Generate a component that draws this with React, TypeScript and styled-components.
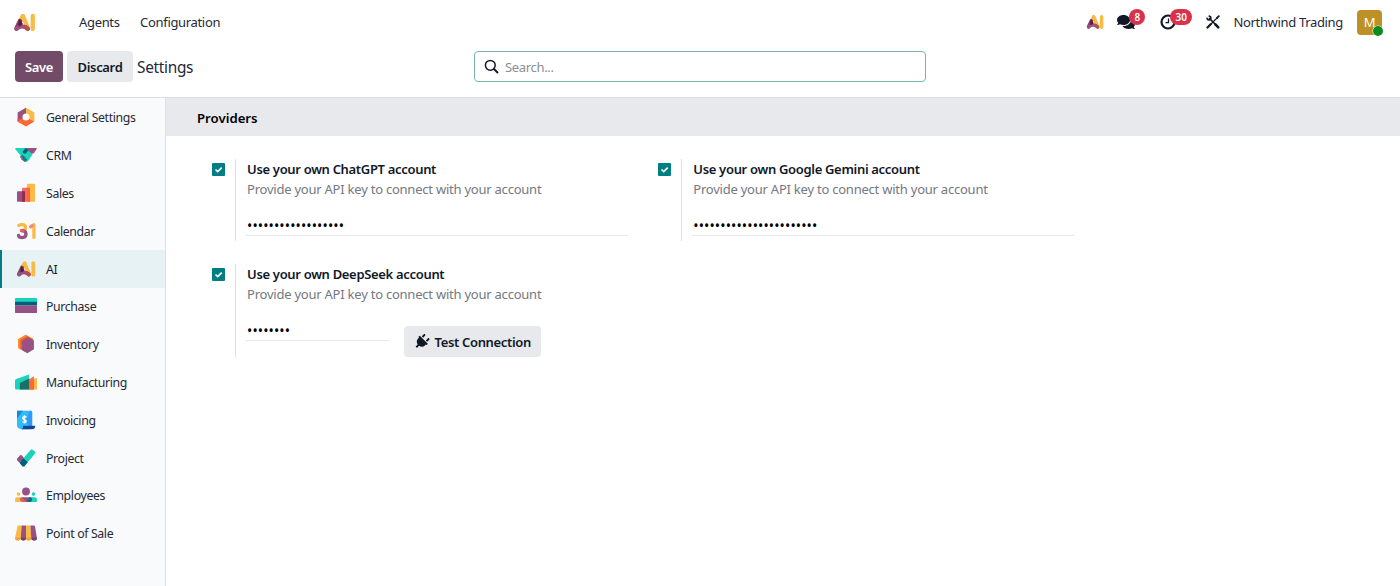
import React from "react";
import styled, { createGlobalStyle } from "styled-components";
import { FaComments, FaPlug } from "react-icons/fa";

const GlobalStyle = createGlobalStyle`
  *, *::before, *::after { box-sizing: border-box; }
  html, body { margin: 0; padding: 0; height: 100%; background: #fff; }
  body { overflow: hidden; color: #111827; font-family: "Noto Sans", "Open Sans", sans-serif; font-size: 13px; line-height: 20px; }
  button, input { font: inherit; color: inherit; letter-spacing: inherit; }
`;

const Page = styled.div`
  display: flex;
  flex-direction: column;
  height: 586px;
`;
const Navbar = styled.header`
  display: flex;
  align-items: center;
  height: 44px;
  padding: 0 18px 0 12px;
  letter-spacing: -0.33px;
  white-space: nowrap;
`;
const Menu = styled.nav`
  display: flex;
  margin-left: 42px;
  gap: 20.5px;
  flex: 1;
`;
const MenuLink = styled.a`
  color: #1f2937;
`;
const Systray = styled.div`
  display: flex;
  align-items: center;
`;
const TrayItem = styled.div<{ $width: number }>`
  position: relative;
  display: flex;
  align-items: center;
  width: ${(p) => p.$width}px;
  height: 24px;
`;
const Badge = styled.span<{ $left: number }>`
  position: absolute;
  top: -1px;
  left: ${(p) => p.$left}px;
  height: 16px;
  padding: 0 5px;
  border-radius: 8px;
  background: #d9324a;
  color: #fff;
  font-size: 10px;
  font-weight: 600;
  line-height: 16px;
  letter-spacing: 0;
`;
const Avatar = styled.div`
  position: relative;
  width: 25px;
  height: 25px;
  margin-left: 14px;
  border-radius: 4px;
  background: #bd9126;
  color: #fff;
  font-size: 13px;
  line-height: 25px;
  text-align: center;
`;
const Presence = styled.span`
  position: absolute;
  right: -1px;
  bottom: -1px;
  width: 10px;
  height: 10px;
  border-radius: 50%;
  background: #0b8a20;
  box-shadow: 0 0 0 0.5px #fff;
`;

const ControlPanel = styled.div`
  display: grid;
  grid-template-columns: 459px 452px 1fr;
  height: 54px;
  padding: 7px 15px 0;
  border-bottom: 1px solid #dcdee2;
  letter-spacing: -0.33px;
`;
const Actions = styled.div`
  display: flex;
  gap: 4px;
`;
const Button = styled.button<{ $primary?: boolean; $width: number }>`
  display: flex;
  align-items: center;
  justify-content: center;
  gap: 5px;
  width: ${(p) => p.$width}px;
  height: 31px;
  padding: 1px 0 0;
  border: 0;
  border-radius: 4px;
  background: ${(p) => (p.$primary ? "#714b67" : "#e7e9ed")};
  color: ${(p) => (p.$primary ? "#fff" : "#111827")};
  font-weight: 600;
  letter-spacing: -0.33px;
  white-space: nowrap;
`;
const Title = styled.h1`
  margin: 0;
  padding-top: 1px;
  font-size: 15.4px;
  font-weight: 400;
  line-height: 31px;
  letter-spacing: -0.3px;
  color: #1f2937;
`;
const SearchBox = styled.label`
  display: flex;
  align-items: center;
  gap: 6px;
  height: 31px;
  padding: 0 9px;
  border: 1px solid #75b5b1;
  border-radius: 4px;
`;
const SearchInput = styled.input`
  flex: 1;
  padding: 0;
  border: 0;
  outline: 0;
  background: none;
  &::placeholder { color: #8b8f97; opacity: 1; }
`;

const Body = styled.div`
  display: flex;
  flex: 1;
  min-height: 0;
`;
const Sidebar = styled.aside`
  width: 166px;
  padding-top: 0.6px;
  border-right: 1px solid #dfe1e5;
  background: #f9fafb;
  font-size: 12.3px;
  letter-spacing: -0.36px;
`;
const Tab = styled.div<{ $active?: boolean }>`
  display: flex;
  align-items: center;
  gap: 9px;
  height: 37.8px;
  padding-left: 13px;
  border-left: 2px solid ${(p) => (p.$active ? "#017e84" : "transparent")};
  background: ${(p) => (p.$active ? "#e6f2f3" : "transparent")};
  color: ${(p) => (p.$active ? "#111827" : "#1f2937")};
  white-space: nowrap;
`;
const TabLabel = styled.span`
  padding-top: 2px;
`;
const Content = styled.main`
  flex: 1;
`;
const SectionTitle = styled.h2`
  height: 38px;
  margin: 0;
  padding-left: 31px;
  background: #e7e9ed;
  font-size: 13.2px;
  font-weight: 600;
  line-height: 40px;
  color: #000;
`;
const SettingsGrid = styled.div`
  display: grid;
  grid-template-columns: 446.3px 446.3px;
  row-gap: 23px;
  padding: 23px 0 0 46px;
`;
const Setting = styled.section`
  display: flex;
`;
const Check = styled.span`
  display: flex;
  width: 13px;
  height: 13px;
  margin: 4px 10px 0 0;
  border-radius: 1px;
  background: #017e84;
`;
const SettingPane = styled.div<{ $height: number }>`
  width: 396px;
  height: ${(p) => p.$height}px;
  padding-left: 11px;
  border-left: 1px solid #dfe1e5;
  white-space: nowrap;
`;
const SettingName = styled.div`
  font-weight: 600;
  letter-spacing: -0.32px;
`;
const SettingHelp = styled.div`
  color: #74787f;
  letter-spacing: -0.23px;
`;
const FieldRow = styled.div`
  display: flex;
  gap: 15px;
  padding-top: 16px;
`;
const KeyField = styled.div<{ $width: number }>`
  width: ${(p) => p.$width}px;
  height: 21px;
  margin-left: -1px;
  padding-left: 1px;
  border-bottom: 1px solid #e7e9ec;
  font-size: 14px;
  line-height: 22px;
  letter-spacing: 0.13px;
  color: #000;
`;
const ButtonSlot = styled.div`
  padding-top: 6px;
`;
const PlugIcon = styled(FaPlug)`
  transform: rotate(45deg);
`;
const IconSvg = styled.svg`
  flex-shrink: 0;
`;

const Icon = ({ size = 22, children }: { size?: number; children: React.ReactNode }) => (
  <IconSvg width={size} height={size} viewBox="0 0 50 50">{children}</IconSvg>
);

const AiShapes = () => (
  <g fill="none" strokeLinecap="round" strokeLinejoin="round">
    <path d="M41.500 11.500V38" stroke="#fbb945" strokeWidth="8.500" />
    <path d="M21.500 12.500L10 36" stroke="#fbb945" strokeWidth="9" />
    <path d="M22 12.500L31.500 36" stroke="#fbb945" strokeWidth="9" />
    <path d="M16 22L9 37" stroke="#88426f" strokeWidth="9" />
    <path d="M9 37.500Q20 28 31.500 37.500" stroke="#985184" strokeWidth="8.500" />
    <path d="M15 20.500L20 28L14 31Z" fill="#5a1c44" stroke="#5a1c44" strokeWidth="3" />
    <path d="M28 34.500L31.500 37.500" stroke="#b4524f" strokeWidth="8.500" />
  </g>
);

const icons: Record<string, React.ReactNode> = {
  general: (
    <>
      <path d="M25 4L44 14.500V35L25 25Z" fill="#fbb945" />
      <path d="M25 4V25L6 36V14.500Z" fill="#985184" />
      <path d="M6 36L25 25L44 35L25 46.500Z" fill="#fc6831" />
      <path d="M6 27L18 29L6 36Z" fill="#e2524b" />
      <circle cx="25" cy="25" r="8" fill="#f9fafb" />
    </>
  ),
  crm: (
    <>
      <path d="M24 9H48Q50.500 9 49.500 11L43 21L30 24Z" fill="#985184" />
      <path d="M13 34L18 29L26 38L22 41Z" fill="#985184" />
      <path d="M2 9H24L40 24L29 39Q26 42 23 39L1 12Q-1 9 2 9Z" fill="#1ad3bb" />
      <path d="M24 9L30 15L24 22Q19 23 17 18Z" fill="#005e7a" />
      <path d="M13 27L18 25L28 36L24 40L20 37Z" fill="#0c7e86" />
      <path d="M11 29L14 26L17 29L14 33Z" fill="#985184" />
    </>
  ),
  sales: (
    <>
      <rect x="27" y="4" width="18.500" height="41" rx="2" fill="#fbb945" />
      <rect x="16" y="13" width="18" height="32" rx="2" fill="#f86b6b" />
      <path d="M27 13H32Q34 13 34 15V43Q34 45 32 45H27Z" fill="#fc6831" />
      <rect x="4.500" y="21" width="18.300" height="24" rx="2" fill="#985184" />
      <path d="M16 21H21Q22.800 21 22.800 23V43Q22.800 45 21 45H16Z" fill="#962b48" />
    </>
  ),
  calendar: (
    <g fill="none" strokeWidth="7.500" strokeLinecap="round" strokeLinejoin="round">
      <path d="M8.500 12.500Q11 10.500 16 10.500Q24 10.500 24 17Q24 24 15 24" stroke="#fbb945" />
      <path d="M15 24Q25 24 25 32Q25 40 16 40Q9 40 8 35" stroke="#985184" />
      <path d="M15 24H18" stroke="#e2624b" />
      <path d="M36 15L43 10.500V39.500" stroke="#fbb945" />
      <path d="M35.500 15.500L39 13" stroke="#f08a8a" />
    </g>
  ),
  ai: <AiShapes />,
  purchase: (
    <>
      <path d="M0 9Q0 7 2 7H48Q50 7 50 9V16H0Z" fill="#1ad3bb" />
      <path d="M0 15.500H50V24H0Z" fill="#005e7a" />
      <path d="M0 24H50V39Q50 41 48 41H2Q0 41 0 39Z" fill="#985184" />
    </>
  ),
  inventory: (
    <>
      <path d="M24 4L41 13V33L24 43L7 34V14Z" fill="#fbb945" />
      <path d="M24 4L41 13V20L14 38L7 34V14Z" fill="#fc8a35" />
      <path d="M27 7L41 14V20L16 38L12 36V16Z" fill="#e9602d" />
      <path d="M29.500 10L43 17V37L28 46L16 39V18Z" fill="#985184" />
    </>
  ),
  manufacturing: (
    <>
      <path d="M36 20L50 16V42H36Z" fill="#fbb945" />
      <path d="M30 20L43 12V42H30Z" fill="#f86b6b" />
      <path d="M32 24L43 19V42H32Z" fill="#fc6831" />
      <path d="M0 22Q0 19 3 18L32 8V42H3Q0 42 0 39Z" fill="#1ad3bb" />
      <path d="M11 27L32 17V42H11Z" fill="#1a6f66" />
    </>
  ),
  invoicing: (
    <>
      <path d="M4.500 4H36Q39 4 39 7V38L32 46H15Q4.500 46 4.500 36Z" fill="#2ebcfa" />
      <path d="M4.500 4H18L4.500 22Z" fill="#1588d8" />
      <path d="M39 7V38H32L25 27L34 4Q39 4 39 7Z" fill="#3397f6" />
      <path d="M18 38H46Q46 46 38 46H14Q19 45 18 38Z" fill="#144496" />
      <path d="M26 18.500Q21 15.500 18 18.500Q16.500 22 21 24Q27 26 25 29Q22 32 17 29M21.500 14V33" fill="none" stroke="#fff" strokeWidth="3" />
    </>
  ),
  project: (
    <>
      <path d="M14 31L36 6Q38 4 40 6L45.500 11Q47 12.500 45.500 14.500L23 42Q20 45 17 42Z" fill="#1ad3bb" />
      <path d="M18 25L29 34L22 43Q19 46 16 43L10 36Z" fill="#005e7a" />
      <path d="M5 26L12 18.500Q13.500 17 15 18.500L20 24L10 36L5 30Q3.500 28 5 26Z" fill="#985184" />
    </>
  ),
  employees: (
    <>
      <circle cx="25" cy="17" r="9" fill="#985184" />
      <circle cx="8" cy="23" r="4" fill="#fbb945" />
      <circle cx="42" cy="23" r="4" fill="#1ad3bb" />
      <path d="M5 30H18L26 41H2Q0 41 0 38V35Q0 30 5 30Z" fill="#fbb945" />
      <path d="M32 30H45Q50 30 50 35V38Q50 41 48 41H25Z" fill="#1ad3bb" />
      <path d="M17 30H33Q38 30 39 34L36 41H22Q12 41 12 35Q13 30 17 30Z" fill="#985184" />
      <path d="M33 30Q38 30 39 35L36 41H27Z" fill="#0c6f80" />
      <path d="M11 32Q19 31 25 41H18Q12 40 11 32Z" fill="#dd6550" />
    </>
  ),
  pos: (
    <>
      <path d="M6 8H15L13 38Q12 42 6.500 42Q0 42 0 37Z" fill="#fbb945" />
      <path d="M15 8H25V37Q25 42 19 42Q13 42 13 37Z" fill="#985184" />
      <path d="M25 8H35L37 37Q37 42 31 42Q25 42 25 37Z" fill="#fbb945" />
      <path d="M35 8H43Q45 8 45.500 10L50 37Q50 42 44 42Q37 42 37 37Z" fill="#985184" />
      <path d="M0.500 36H13Q13 42 6.500 42Q0 42 0.500 36ZM25 36H37Q37 42 31 42Q25 42 25 36Z" fill="#f3a13c" />
      <path d="M13 36H25Q25 42 19 42Q13 42 13 36ZM37 36H50Q50 42 44 42Q37 42 37 36Z" fill="#7e3d6b" />
    </>
  ),
};

const tabs = [
  { icon: "general", label: "General Settings" },
  { icon: "crm", label: "CRM" },
  { icon: "sales", label: "Sales" },
  { icon: "calendar", label: "Calendar" },
  { icon: "ai", label: "AI", active: true },
  { icon: "purchase", label: "Purchase" },
  { icon: "inventory", label: "Inventory" },
  { icon: "manufacturing", label: "Manufacturing" },
  { icon: "invoicing", label: "Invoicing" },
  { icon: "project", label: "Project" },
  { icon: "employees", label: "Employees" },
  { icon: "pos", label: "Point of Sale" },
];

const providers = [
  { name: "ChatGPT", dots: 18, height: 82, width: 382 },
  { name: "Google Gemini", dots: 23, height: 82, width: 382 },
  { name: "DeepSeek", dots: 8, height: 93, width: 143, test: true },
];

const SearchIcon = () => (
  <IconSvg width="15" height="15" viewBox="0 0 15 15" fill="none" stroke="#111827" strokeLinecap="round">
    <circle cx="6.300" cy="6.300" r="4.900" strokeWidth="1.500" />
    <path d="M10 10L13.500 13.500" strokeWidth="1.900" />
  </IconSvg>
);
const ClockIcon = () => (
  <IconSvg width="16" height="16" viewBox="0 0 16 16" fill="none" stroke="#111827">
    <circle cx="8" cy="8" r="6.500" strokeWidth="2.200" />
    <path d="M8.500 4.500V8.700H5.500" strokeWidth="1.300" />
  </IconSvg>
);
const ToolsIcon = () => (
  <IconSvg width="14" height="14" viewBox="0 0 14 14" fill="none" stroke="#111827" strokeLinecap="round">
    <path d="M3.500 3.500L11 11" strokeWidth="1.700" />
    <path d="M1.500 12.500L4.700 9.300" strokeWidth="2.300" />
    <path d="M5 9L11 3" strokeWidth="1.100" />
    <path d="M12.800 1.200L11 3" strokeWidth="1.800" />
    <path d="M3.300 1.100A1.900 1.900 0 1 1 1.100 3.300" strokeWidth="1.700" />
    <path d="M9.500 9.500L12.300 12.300" strokeWidth="2.500" />
  </IconSvg>
);

export default function App() {
  return (
    <Page>
      <GlobalStyle />
      <Navbar>
        <Icon size={25}><AiShapes /></Icon>
        <Menu>
          <MenuLink>Agents</MenuLink>
          <MenuLink>Configuration</MenuLink>
        </Menu>
        <Systray>
          <TrayItem $width={32}><Icon size={20}><AiShapes /></Icon></TrayItem>
          <TrayItem $width={43}><FaComments size={18} /><Badge $left={12}>8</Badge></TrayItem>
          <TrayItem $width={46}><ClockIcon /><Badge $left={10}>30</Badge></TrayItem>
          <TrayItem $width={27}><ToolsIcon /></TrayItem>
          <MenuLink>Northwind Trading</MenuLink>
          <Avatar>M<Presence /></Avatar>
        </Systray>
      </Navbar>
      <ControlPanel>
        <Actions>
          <Button $primary $width={48}>Save</Button>
          <Button $width={66}>Discard</Button>
          <Title>Settings</Title>
        </Actions>
        <SearchBox><SearchIcon /><SearchInput placeholder="Search..." /></SearchBox>
      </ControlPanel>
      <Body>
        <Sidebar>
          {tabs.map((t) => (
            <Tab key={t.label} $active={t.active}>
              <Icon>{icons[t.icon]}</Icon>
              <TabLabel>{t.label}</TabLabel>
            </Tab>
          ))}
        </Sidebar>
        <Content>
          <SectionTitle>Providers</SectionTitle>
          <SettingsGrid>
            {providers.map((p) => (
              <Setting key={p.name}>
                <Check>
                  <IconSvg width="13" height="13" viewBox="0 0 13 13" fill="none" stroke="#fff" strokeWidth="1.700">
                    <path d="M3.500 6.500L5.700 8.600L9.700 4.600" />
                  </IconSvg>
                </Check>
                <SettingPane $height={p.height}>
                  <SettingName>Use your own {p.name} account</SettingName>
                  <SettingHelp>Provide your API key to connect with your account</SettingHelp>
                  <FieldRow>
                    <KeyField $width={p.width}>{"•".repeat(p.dots)}</KeyField>
                    {p.test && (
                      <ButtonSlot>
                        <Button $width={137}><PlugIcon size={15.500} />Test Connection</Button>
                      </ButtonSlot>
                    )}
                  </FieldRow>
                </SettingPane>
              </Setting>
            ))}
          </SettingsGrid>
        </Content>
      </Body>
    </Page>
  );
}
